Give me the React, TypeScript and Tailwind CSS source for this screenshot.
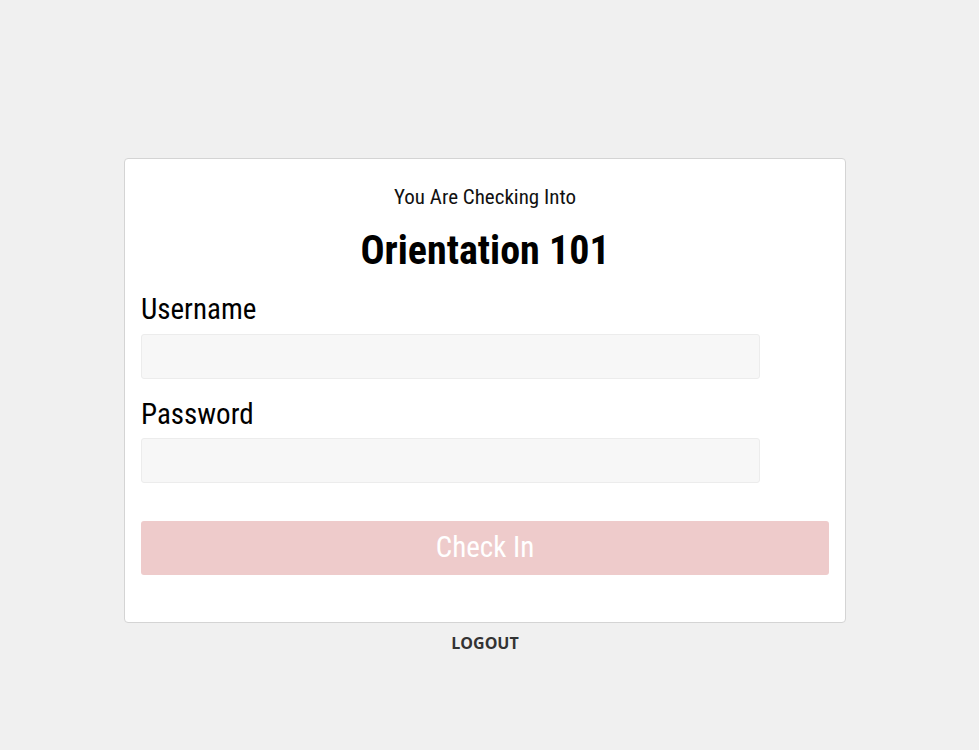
import React from "react";

const cond = "font-['Roboto_Condensed','Roboto',sans-serif] font-stretch-condensed";

export default function App() {
  return (
    <div className="min-h-[750px] w-full bg-[#f0f0f0] pt-[158px]">
      <div className="ml-[124px] w-[722px]">
        <div className={`rounded-[4px] border border-[#d4d4d4] bg-white px-4 pt-[25px] pb-[47px] ${cond}`}>
          <div className="text-center text-[21px] leading-[26px] text-[#111]">You Are Checking Into</div>
          <h1 className="mt-[17px] text-center text-[40px] leading-[48px] font-bold text-black">Orientation 101</h1>
          <label className="mt-[15px] block text-[29px] leading-[38px] text-black">Username</label>
          <input className="mt-[6px] block h-[45px] w-[90%] rounded-[3px] border border-[#ececec] bg-[#f7f7f7] outline-none" />
          <label className="mt-[16px] block text-[29px] leading-[38px] text-black">Password</label>
          <input
            type="password"
            className="mt-[5px] block h-[45px] w-[90%] rounded-[3px] border border-[#ececec] bg-[#f7f7f7] outline-none"
          />
          <button className="mt-[38px] block h-[54px] w-full rounded-[3px] bg-[#eecbcb] text-[29px] text-white">
            Check In
          </button>
        </div>
        <div className="mt-[8px] text-center font-['Open_Sans',sans-serif] text-[16px] font-bold text-[#333]">
          LOGOUT
        </div>
      </div>
    </div>
  );
}
